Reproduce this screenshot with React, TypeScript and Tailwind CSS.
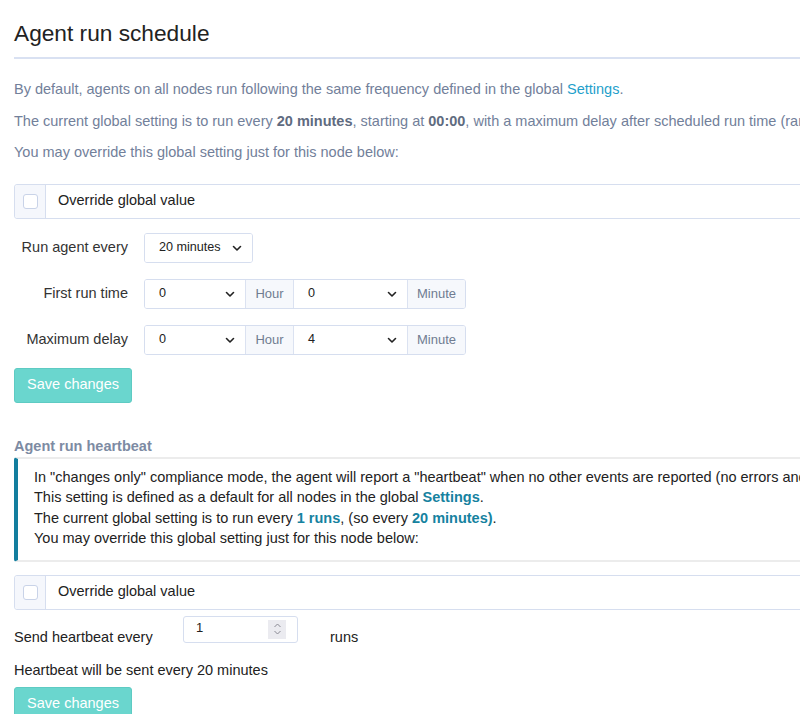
function Chevron() {
  return (
    <svg width="12" height="12" viewBox="0 0 12 12" className="shrink-0">
      <path d="M2.5 4.5 L6 8 L9.5 4.5" fill="none" stroke="#222" strokeWidth="1.6" strokeLinecap="round" strokeLinejoin="round" />
    </svg>
  );
}

function Select({ value, width }: { value: string; width: string }) {
  return (
    <div className={`flex items-center justify-between h-[28px] ${width} pl-[14px] pr-[9px] bg-white text-[12.6px] text-[#222]`}>
      <span>{value}</span>
      <Chevron />
    </div>
  );
}

function Addon({ label, width }: { label: string; width: string }) {
  return (
    <div className={`flex items-center justify-center h-[28px] ${width} bg-[#f6f8fc] border-l border-[#dbe2f1] text-[13px] text-[#707c91]`}>
      {label}
    </div>
  );
}

function OverrideRow() {
  return (
    <div className="flex h-[35px] w-[1000px] border border-[#d6deef] rounded-[3px] bg-white">
      <div className="flex items-center justify-center w-[31px] bg-[#f5f7fc] border-r border-[#d6deef] rounded-l-[3px]">
        <div className="w-[15px] h-[15px] rounded-[3px] border border-[#c9d3e8] bg-white" />
      </div>
      <div className="flex items-center pl-[12px] text-[14.5px] text-[#222]">Override global value</div>
    </div>
  );
}

function TimeRow({ label, hour, minute }: { label: string; hour: string; minute: string }) {
  return (
    <div className="flex items-center">
      <div className="w-[114px] text-right text-[14.5px] text-[#333]">{label}</div>
      <div className="ml-[16px] flex border border-[#d6deef] rounded-[3px] overflow-hidden">
        <Select value={hour} width="w-[100px]" />
        <Addon label="Hour" width="w-[48px]" />
        <div className="border-l border-[#dbe2f1]">
          <Select value={minute} width="w-[113px]" />
        </div>
        <Addon label="Minute" width="w-[58px]" />
      </div>
    </div>
  );
}

function SaveButton() {
  return (
    <button className="h-[35px] w-[118px] rounded-[3px] bg-[#6ad6ce] border border-[#5ecbc3] text-white text-[14.5px]">
      Save changes
    </button>
  );
}

export default function App() {
  return (
    <div className="w-[800px] h-[714px] overflow-hidden bg-white font-['Liberation_Sans',Arial,sans-serif]">
      <div className="w-[1100px] pl-[14px] whitespace-nowrap">
        {/* Heading */}
        <h2 className="pt-[19px] pb-[10px] text-[22.7px] leading-[28px] text-[#222] border-b-2 border-[#d9e1f2]">
          Agent run schedule
        </h2>

        {/* Intro */}
        <div className="pt-[22px] text-[14.5px] text-[#72809a] flex flex-col gap-[15px] leading-[16.5px]">
          <p>
            By default, agents on all nodes run following the same frequency defined in the global{" "}
            <span className="text-[#1f9fcb]">Settings</span>.
          </p>
          <p>
            The current global setting is to run every <b className="text-[#5f6b80]">20 minutes</b>, starting at{" "}
            <b className="text-[#5f6b80]">00:00</b>, with a maximum delay after scheduled run time (random interval) of 4 minutes.
          </p>
          <p>You may override this global setting just for this node below:</p>
        </div>

        <div className="mt-[23px]">
          <OverrideRow />
        </div>

        {/* Schedule form */}
        <div className="mt-[14px] flex flex-col gap-[16px]">
          <div className="flex items-center">
            <div className="w-[114px] text-right text-[14.5px] text-[#333]">Run agent every</div>
            <div className="ml-[16px] border border-[#d6deef] rounded-[3px] overflow-hidden">
              <Select value="20 minutes" width="w-[107px]" />
            </div>
          </div>
          <TimeRow label="First run time" hour="0" minute="0" />
          <TimeRow label="Maximum delay" hour="0" minute="4" />
        </div>
        <div className="mt-[13px] flex">
          <SaveButton />
        </div>

        {/* Heartbeat */}
        <h4 className="mt-[35px] text-[14.5px] font-bold text-[#7d8ba3] leading-[16px]">Agent run heartbeat</h4>
        <div className="mt-[3px] w-[1000px] border-2 border-l-4 border-[#ececec] border-l-[#137e9e] rounded-[3px] pt-[8px] pb-[11px] pl-[16px] text-[14.5px] leading-[20.5px] text-[#222]">
          <p>
            In "changes only" compliance mode, the agent will report a "heartbeat" when no other events are reported (no errors and no repairs) during a run.
          </p>
          <p>
            This setting is defined as a default for all nodes in the global <b className="text-[#16829f]">Settings</b>.
          </p>
          <p>
            The current global setting is to run every <b className="text-[#16829f]">1 runs</b>, (so every{" "}
            <b className="text-[#16829f]">20 minutes)</b>.
          </p>
          <p>You may override this global setting just for this node below:</p>
        </div>

        <div className="mt-[13px]">
          <OverrideRow />
        </div>

        <div className="mt-[6px] flex items-start text-[14.5px] leading-[16px] text-[#222]">
          <div className="w-[169px] mt-[13px]">Send heartbeat every</div>
          <div className="flex items-center justify-between w-[115px] h-[27px] border border-[#d6deef] rounded-[3px] pl-[12px] pr-[11px] text-[13px]">
            <span className="-mt-[3px]">1</span>
            <div className="flex flex-col items-center justify-center w-[18px] h-[19px] bg-[#ebebf0]">
              <svg width="9" height="14" viewBox="0 0 9 14">
                <path d="M1.5 5 L4.5 2 L7.5 5 M1.5 9 L4.5 12 L7.5 9" fill="none" stroke="#8a8a94" strokeWidth="1" />
              </svg>
            </div>
          </div>
          <div className="ml-[32px] mt-[13px]">runs</div>
        </div>

        <p className="mt-[17px] text-[14.5px] text-[#222] leading-[16px]">Heartbeat will be sent every 20 minutes</p>
        <div className="mt-[9px] flex">
          <SaveButton />
        </div>
      </div>
    </div>
  );
}
